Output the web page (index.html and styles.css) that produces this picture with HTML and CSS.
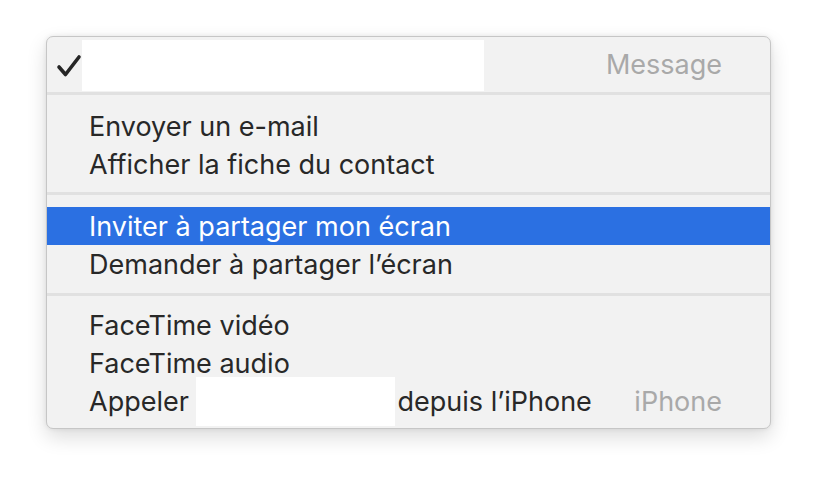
FILE: index.html
```html
<!DOCTYPE html>
<html lang="fr">
<head>
<meta charset="utf-8">
<title>Menu</title>
<link rel="stylesheet" href="styles.css">
</head>
<body>
<div class="menu">
  <div class="header">
    <svg class="check" width="26" height="24" viewBox="0 0 26 24"><path d="M3 13 L9.5 20.5 L23 3" fill="none" stroke="#262626" stroke-width="3.6" stroke-linecap="round" stroke-linejoin="round"/></svg>
    <div class="redact-top"></div>
    <span class="shortcut">Message</span>
  </div>
  <div class="sep"></div>
  <div class="group g1">
    <div class="item">Envoyer un e-mail</div>
    <div class="item">Afficher la fiche du contact</div>
  </div>
  <div class="sep"></div>
  <div class="group g2">
    <div class="item selected">Inviter à partager mon écran</div>
    <div class="item">Demander à partager l’écran</div>
  </div>
  <div class="sep"></div>
  <div class="group g3">
    <div class="item">FaceTime vidéo</div>
    <div class="item">FaceTime audio</div>
    <div class="item">Appeler <span class="redact-name"></span>depuis l’iPhone<span class="shortcut">iPhone</span></div>
  </div>
</div>
</body>
</html>
```
FILE: styles.css
```css
html, body {
  margin: 0;
  padding: 0;
  background: #ffffff;
}
body {
  min-height: 484px;
  box-sizing: border-box;
  padding: 36px 0 56px 46px;
  font-family: Inter, "Liberation Sans", sans-serif;
  font-size: 27px;
  color: #282828;
}
.menu {
  width: 723px;
  background: #f2f2f2;
  border: 1px solid #c6c6c6;
  border-radius: 7px;
  box-shadow: 0 8px 20px rgba(0, 0, 0, 0.14), 0 0 5px rgba(0, 0, 0, 0.08);
  overflow: hidden;
}
.header {
  height: 55px;
  display: flex;
  align-items: flex-start;
}
.check {
  margin: 17px 0 0 9px;
}
.redact-top {
  width: 402px;
  height: 51px;
  margin: 3px 0 0 0;
  background: #ffffff;
}
.header .shortcut {
  margin-left: auto;
  margin-right: 48px;
  line-height: 55px;
}
.shortcut {
  color: #a9a9a9;
}
.sep {
  height: 3px;
  background: #e1e1e1;
}
.g1 { padding: 12px 0 9px; }
.g2 { padding: 12px 0 10px; }
.g3 { padding: 10px 0 8px; }
.item {
  height: 38px;
  display: flex;
  align-items: center;
  padding: 0 48px 0 42px;
  white-space: pre;
}
.item.selected {
  background: #2b70e2;
  color: #ffffff;
}
.item .shortcut {
  margin-left: auto;
}
.redact-name {
  display: inline-block;
  width: 199px;
  height: 49px;
  margin: 0 2px 0 0;
  background: #ffffff;
  flex: none;
}
```
